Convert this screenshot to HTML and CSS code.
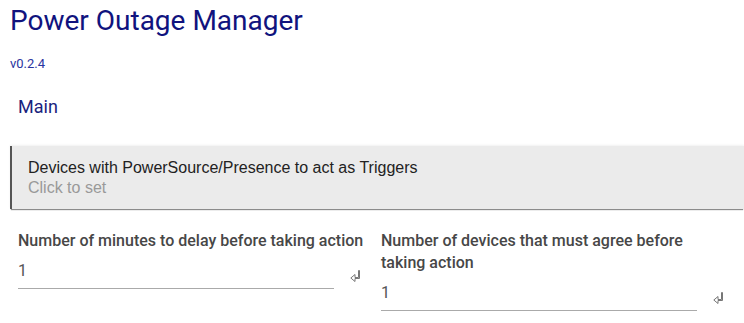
FILE: index.html
```html
<!DOCTYPE html>
<html lang="en">
	<head>
		<meta charset="UTF-8">
		<meta name="viewport" content="width=device-width, initial-scale=1.0">
		<title>Power Outage Manager</title>
		<link rel="stylesheet" href="styles.css">
	</head>
	<body>
	<h1 class="app-title">Power Outage Manager</h1>
	<div class="app-version">v0.2.4</div>

	<div class="section-title">Main</div>

	<div class="picker" role="button">
		<div class="picker-label">Devices with PowerSource/Presence to act as Triggers</div>
		<div class="picker-value">Click to set</div>
	</div>

	<div class="field-row">
		<div class="field">
			<label for="delay" class="field-label">Number of minutes to delay before taking action</label>
			<div class="field-input">
				<input id="delay" type="text" value="1">
				<svg class="enter-icon" width="11" height="13" viewBox="0 0 11 13"><path d="M9.5 0.5 V8.5 H5 V11.5 L0.8 8 L5 4.5 V7.5 H8.5 V0.5 Z" fill="none" stroke="#777" stroke-width="1"/></svg>
			</div>
		</div>
		<div class="field">
			<label for="agree" class="field-label">Number of devices that must agree before taking action</label>
			<div class="field-input">
				<input id="agree" type="text" value="1">
				<svg class="enter-icon" width="11" height="13" viewBox="0 0 11 13"><path d="M9.5 0.5 V8.5 H5 V11.5 L0.8 8 L5 4.5 V7.5 H8.5 V0.5 Z" fill="none" stroke="#777" stroke-width="1"/></svg>
			</div>
		</div>
	</div>
	</body>
</html>
```

FILE: styles.css
```css
body {
	font-family: Roboto, 'Liberation Sans', Arial, sans-serif;
	margin: 0;
	padding: 0;
	color: #333;
	overflow: hidden;
}
.app-title {
	font-size: 28px;
	font-weight: 400;
	color: #10137e;
	margin: 0;
	padding: 5px 0 0 10px;
	line-height: 32px;
}
.app-version {
	font-size: 13px;
	color: #2a35a0;
	padding: 20px 0 0 10px;
	line-height: 14px;
}
.section-title {
	font-size: 18px;
	color: #1a237e;
	padding: 25px 0 0 18px;
	line-height: 22px;
}
.picker {
	margin: 28px 0 0 10px;
	background-color: #ebebeb;
	border-left: 2px solid #555;
	padding: 12px 16px 11px;
	box-shadow: 0 2px 1px -1px rgba(0, 0, 0, .45), 0 -1px 2px rgba(0, 0, 0, .06);
	cursor: pointer;
	font-family: 'Liberation Sans', Arial, sans-serif;
}
.picker-label {
	font-size: 16px;
	line-height: 20px;
	color: #222;
}
.picker-value {
	font-size: 16px;
	line-height: 20px;
	color: #999;
}
.field-row {
	display: grid;
	grid-template-columns: 363px 363px;
	margin: 21px 0 0 10px;
}
.field {
	padding: 0 8px;
}
.field-label {
	display: block;
	font-size: 16px;
	font-weight: 500;
	line-height: 22px;
	color: #474747;
}
.field-input {
	display: flex;
	align-items: center;
	gap: 16px;
}
.field-input input {
	width: 316px;
	box-sizing: border-box;
	height: 37px;
	border: none;
	border-bottom: 1px solid #aaa;
	outline: none;
	background: transparent;
	font-family: Roboto, 'Liberation Sans', Arial, sans-serif;
	font-size: 16px;
	color: #555;
	padding: 0;
}
.enter-icon {
	margin-top: 12px;
}
```
